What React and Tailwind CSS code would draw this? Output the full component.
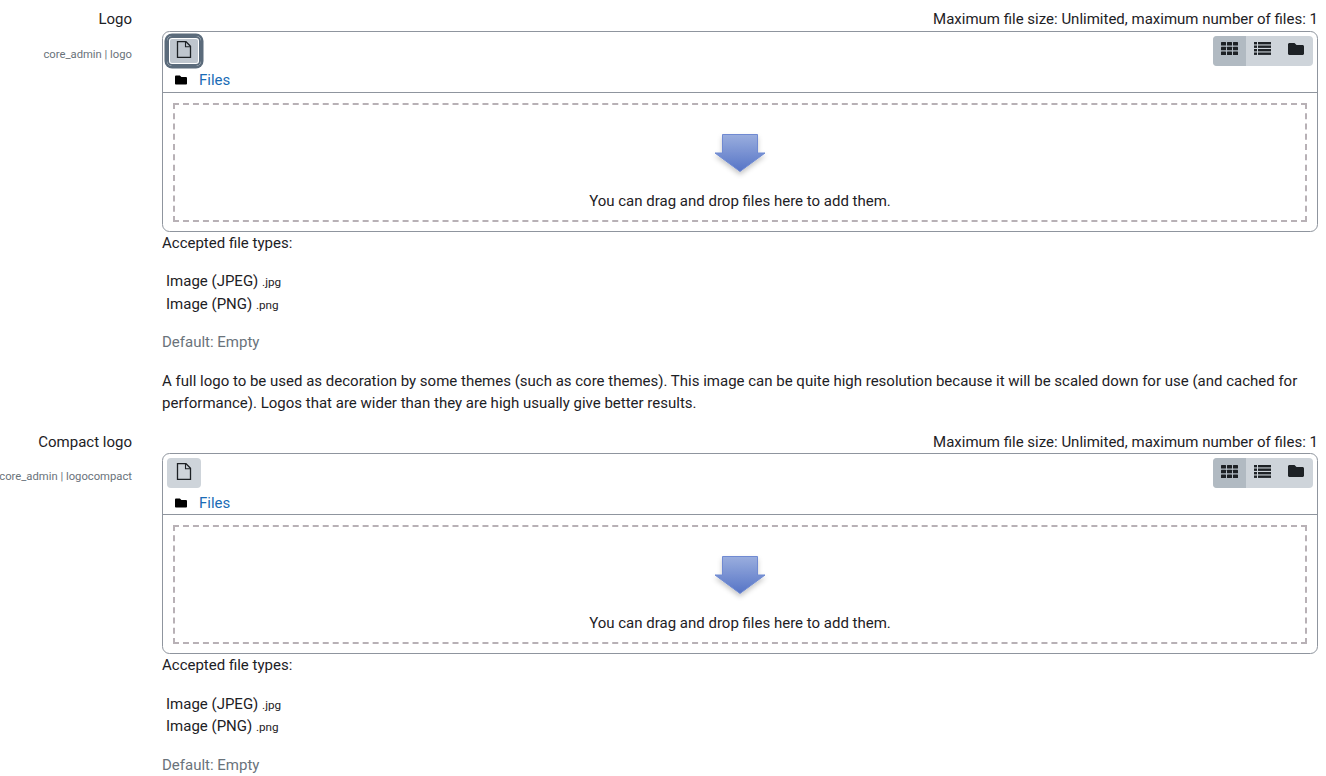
import { FaFolder } from "react-icons/fa";

const FileIcon = () => (
  <svg width="16" height="17" viewBox="0 0 16 17" fill="none" className="mt-[-3px]">
    <path d="M1.500 0.700h8.500l4.500 4.500v11.100h-13z" stroke="#1d2125" strokeWidth="1.300" />
    <path d="M9.500 0.700v5h5" stroke="#1d2125" strokeWidth="1.100" />
  </svg>
);

const GridIcon = () => (
  <svg width="17" height="13" viewBox="0 0 17 13" fill="#1d2125">
    <rect x="0" y="0" width="5" height="3.600" rx="0.500" />
    <rect x="6" y="0" width="5" height="3.600" rx="0.500" />
    <rect x="12" y="0" width="5" height="3.600" rx="0.500" />
    <rect x="0" y="4.700" width="5" height="3.600" rx="0.500" />
    <rect x="6" y="4.700" width="5" height="3.600" rx="0.500" />
    <rect x="12" y="4.700" width="5" height="3.600" rx="0.500" />
    <rect x="0" y="9.400" width="5" height="3.600" rx="0.500" />
    <rect x="6" y="9.400" width="5" height="3.600" rx="0.500" />
    <rect x="12" y="9.400" width="5" height="3.600" rx="0.500" />
  </svg>
);

const ListIcon = () => (
  <svg width="17" height="13" viewBox="0 0 17 13" fill="#1d2125">
    <rect x="0" y="0" width="3" height="2.400" />
    <rect x="4" y="0" width="13" height="2.400" />
    <rect x="0" y="3.500" width="3" height="2.400" />
    <rect x="4" y="3.500" width="13" height="2.400" />
    <rect x="0" y="7" width="3" height="2.400" />
    <rect x="4" y="7" width="13" height="2.400" />
    <rect x="0" y="10.500" width="3" height="2.400" />
    <rect x="4" y="10.500" width="13" height="2.400" />
  </svg>
);

const DropArrow = ({ id }) => (
  <svg width="60" height="48" viewBox="0 0 60 48" className="block">
    <defs>
      <linearGradient id={id} x1="0" y1="0" x2="0" y2="1">
        <stop offset="0" stopColor="#9aaede" />
        <stop offset="1" stopColor="#5674c6" />
      </linearGradient>
      <filter id={id + "s"} x="-20%" y="-20%" width="140%" height="150%">
        <feDropShadow dx="0" dy="3" stdDeviation="2.500" floodColor="#000" floodOpacity="0.22" />
      </filter>
    </defs>
    <path d="M12.500 2.500h35v18.500h7.500l-25 18.500-25-18.500h7.500z" fill={`url(#${id})`} stroke="#6f8ad2" strokeWidth="1" filter={`url(#${id}s)`} />
  </svg>
);

const Setting = ({ id, title, name, active }) => (
  <div className="flex">
    <div className="w-[132px] shrink-0 text-right">
      <div className="mt-[8px] h-[22.5px] whitespace-nowrap leading-[22.5px]">{title}</div>
      <div className="mt-[15px] flex justify-end whitespace-nowrap text-[11.25px] leading-[17px] text-[#6a737b]">
        {name}
      </div>
    </div>
    <div className="ml-[30px] w-[1156px] shrink-0">
      <div className="mt-[8px] h-[22.5px] text-right leading-[22.5px]">
        Maximum file size: Unlimited, maximum number of files: 1
      </div>
      <div className="h-[201px] rounded-[7.5px] border border-[#8f959e]">
        <div className="flex h-[36px] justify-between pl-[4px] pr-[4px] pt-[4px]">
          <div
            className={
              active
                ? "flex h-[30px] w-[34px] items-center justify-center rounded-[5px] bg-[#bfc6ce] shadow-[inset_0_0_0_2px_#5b6b7b,inset_0_0_0_3px_#fff,0_0_0_2.5px_#5b6b7b]"
                : "flex h-[30px] w-[34px] items-center justify-center rounded-[4px] bg-[#ced4da]"
            }
          >
            <FileIcon />
          </div>
          <div className="flex h-[30px] overflow-hidden rounded-[4px] bg-[#ced4da]">
            <div className="flex w-[33px] items-center justify-center bg-[#b1bac2] pb-[4px]">
              <GridIcon />
            </div>
            <div className="flex w-[33px] items-center justify-center pb-[4px]">
              <ListIcon />
            </div>
            <div className="flex w-[34px] items-center justify-center pb-[4px] text-[#1d2125]">
              <FaFolder size={16} />
            </div>
          </div>
        </div>
        <div className="flex h-[24px] items-center pl-[12px] pt-[1.5px]">
          <FaFolder size={12} className="text-black" />
          <span className="ml-[12px] leading-[22.5px] text-[#1a6cb6]">Files</span>
        </div>
        <div className="border-t border-[#8f959e] px-[10px] pt-[10px]">
          <div className="flex h-[119px] flex-col items-center border-2 border-dashed border-[#b8b1b6] pt-[27px]">
            <DropArrow id={id} />
            <div className="mt-[10px] leading-[22.5px]">You can drag and drop files here to add them.</div>
          </div>
        </div>
      </div>
      <div className="leading-[22.5px]">Accepted file types:</div>
      <div className="mt-[16px] pl-[4px]">
        <div className="h-[22.5px] leading-[22.5px]">
          Image (JPEG) <span className="text-[11.7px] leading-[11px]">.jpg</span>
        </div>
        <div className="h-[22.5px] leading-[22.5px]">
          Image (PNG) <span className="text-[11.7px] leading-[11px]">.png</span>
        </div>
      </div>
      <div className="mt-[16px] leading-[22.5px] text-[#6a737b]">Default: Empty</div>
      <div className="mt-[16.25px] leading-[22.5px]">
        A full logo to be used as decoration by some themes (such as core themes). This image can be quite high resolution because it will be scaled down for use (and cached for performance). Logos that are wider than they are high usually give better results.
      </div>
    </div>
  </div>
);

export default function App() {
  return (
    <div className="h-[776px] overflow-hidden bg-white font-['Roboto',sans-serif] text-[15px] text-[#1d2125]">
      <Setting id="logoarrow" title="Logo" name="core_admin | logo" active />
      <div className="mt-[7.75px]">
        <Setting id="compactarrow" title="Compact logo" name="core_admin | logocompact" />
      </div>
    </div>
  );
}
